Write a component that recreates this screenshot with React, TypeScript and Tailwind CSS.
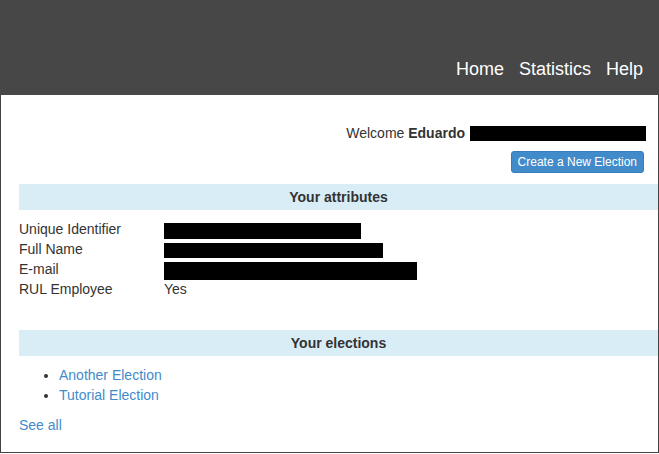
import React from 'react';

const attributes = [
  { label: 'Unique Identifier', bar: 'w-[197px] h-[16px] mt-[4px]' },
  { label: 'Full Name', bar: 'w-[219px] h-[15px] mt-[4px]' },
  { label: 'E-mail', bar: 'w-[253px] h-[18px] mt-[3px]' },
];

const elections = ['Another Election', 'Tutorial Election'];

const App = () => {
  return (
    <div className="h-[454px] overflow-hidden bg-white text-[#333] font-['Liberation_Sans',Arial,sans-serif]">
      <header className="h-[95px] bg-[#474747] flex items-end justify-end pr-[16px] pb-[16px]">
        <nav className="flex gap-[15px] text-[18px] leading-[20px] text-white">
          <a href="#">Home</a>
          <a href="#">Statistics</a>
          <a href="#">Help</a>
        </nav>
      </header>

      <main className="h-[358px] flex flex-col border-x border-b border-[#444] pl-[18px] pt-[28px] text-[14px] leading-[20px]">
        <div className="mr-[12px] flex justify-end items-center">
          <span>
            Welcome <b>Eduardo</b>
          </span>
          <span className="ml-[5px] w-[176px] h-[15px] bg-black" />
        </div>

        <div className="mt-[8px] mr-[14px] flex justify-end">
          <button className="h-[22px] px-[6px] rounded-[3px] bg-[#428bca] border border-[#357ebd] text-white text-[12px] leading-[18px]">
            Create a New Election
          </button>
        </div>

        <h2 className="mt-[11px] h-[26px] bg-[#d9edf7] flex items-center justify-center font-bold text-[14px]">
          Your attributes
        </h2>

        <div className="mt-[9px]">
          {attributes.map((a) => (
            <div key={a.label} className="flex h-[20px]">
              <span className="w-[145px] shrink-0">{a.label}</span>
              <span className={`${a.bar} bg-black`} />
            </div>
          ))}
          <div className="flex h-[20px]">
            <span className="w-[145px] shrink-0">RUL Employee</span>
            <span>Yes</span>
          </div>
        </div>

        <h2 className="mt-[31px] h-[26px] bg-[#d9edf7] flex items-center justify-center font-bold text-[14px]">
          Your elections
        </h2>

        <ul className="mt-[9px] list-disc pl-[40px]">
          {elections.map((e) => (
            <li key={e}>
              <a href="#" className="text-[#428bca]">
                {e}
              </a>
            </li>
          ))}
        </ul>

        <div className="mt-[10px]">
          <a href="#" className="text-[#428bca]">
            See all
          </a>
        </div>
      </main>
    </div>
  );
};

export default App;
